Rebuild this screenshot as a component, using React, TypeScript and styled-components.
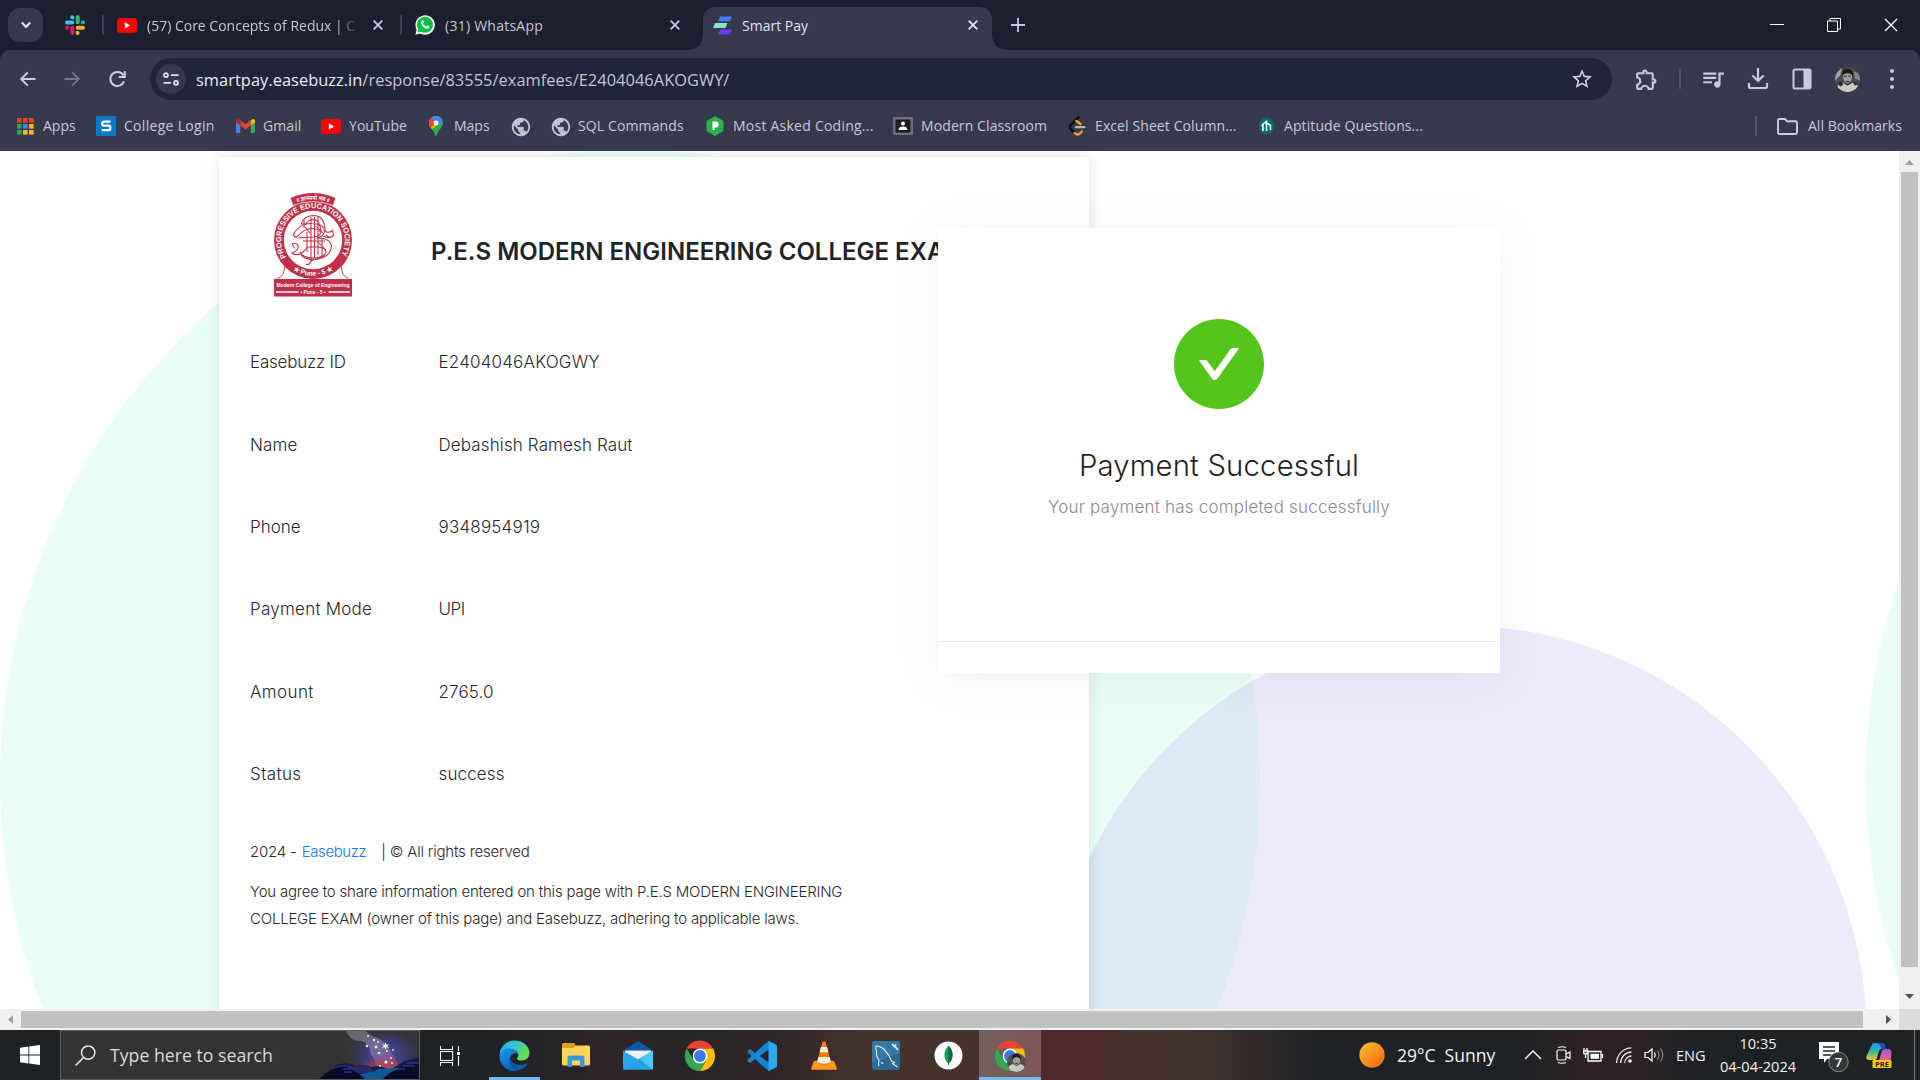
import React from "react";
import styled, { createGlobalStyle } from "styled-components";
import { MdOutlineExtension, MdQueueMusic, MdStarOutline, MdPublic } from "react-icons/md";

const uiFont = `"Open Sans", "Noto Sans", sans-serif`;
const pageFont = `"Inter", "Liberation Sans", sans-serif`;

const GlobalStyle = createGlobalStyle`
  * { box-sizing: border-box; }
  html, body { margin: 0; padding: 0; overflow: hidden; background: #fff; }
  svg { display: block; flex: none; }
`;

const Screen = styled.div`
  display: flex;
  flex-direction: column;
  width: 1920px;
  height: 1080px;
  overflow: hidden;
  background: #1b1f2f;
  font-family: ${uiFont};
`;

/* ---------- tab strip ---------- */
const TabStrip = styled.header`
  display: flex;
  align-items: center;
  height: 50px;
  flex: none;
  background: #1b1f2f;
`;
const TabSearch = styled.button`
  display: grid;
  place-items: center;
  width: 35px;
  height: 34px;
  margin: 0 0 0 8px;
  padding: 0;
  border: 0;
  border-radius: 12px;
  background: #373a4e;
`;
const PinnedTab = styled.div`
  display: flex;
  justify-content: center;
  width: 59px;
  padding-left: 5px;
`;
const StripDivider = styled.i`
  width: 2px;
  height: 20px;
  border-radius: 1px;
  background: #3d4158;
`;
const Tab = styled.div<{ $w: number; $end?: number }>`
  display: flex;
  align-items: center;
  width: ${(p) => p.$w}px;
  padding: 0 ${(p) => p.$end ?? 17}px 0 13px;
`;
const ActiveTab = styled.div`
  position: relative;
  display: flex;
  align-items: center;
  align-self: flex-end;
  width: 289px;
  height: 43px;
  margin-left: 11px;
  padding: 0 14px 7px 10px;
  border-radius: 12px 12px 0 0;
  background: #373a4e;
  &::before,
  &::after {
    content: "";
    position: absolute;
    bottom: 0;
    width: 14px;
    height: 14px;
  }
  &::before {
    left: -14px;
    background: radial-gradient(circle at 0 0, transparent 13.5px, #373a4e 14px);
  }
  &::after {
    right: -14px;
    background: radial-gradient(circle at 100% 0, transparent 13.5px, #373a4e 14px);
  }
`;
const TabTitle = styled.span<{ $active?: boolean; $fade?: boolean; $ls?: number }>`
  flex: 1;
  margin-left: 10px;
  padding-top: 1px;
  overflow: hidden;
  white-space: nowrap;
  font-size: 14px;
  line-height: 20px;
  letter-spacing: ${(p) => p.$ls ?? 0}px;
  color: ${(p) => (p.$active ? "#e3e2ee" : "#c5c6d6")};
  margin-right: ${(p) => (p.$fade ? 14 : 0)}px;
  mask-image: ${(p) => (p.$fade ? "linear-gradient(90deg,#000 190px,transparent 212px)" : "none")};
`;
const NewTab = styled.div`
  width: 14px;
  margin-left: 19px;
`;
const WindowControls = styled.div`
  display: flex;
  align-items: center;
  gap: 43px;
  margin-left: auto;
  margin-right: 22px;
`;

/* ---------- toolbar ---------- */
const Chrome = styled.div`
  flex: none;
  height: 101px;
  border-radius: 10px 10px 0 0;
  background: #373a4e;
`;
const Toolbar = styled.div`
  display: flex;
  align-items: center;
  height: 58px;
  padding-left: 18px;
`;
const NavButtons = styled.div`
  display: flex;
  gap: 24px;
  width: 132px;
`;
const Omnibox = styled.div`
  display: flex;
  align-items: center;
  width: 1462px;
  height: 42px;
  padding: 0 18px 0 6px;
  border-radius: 21px;
  background: #212538;
`;
const SiteInfo = styled.span`
  display: grid;
  place-items: center;
  width: 30px;
  height: 30px;
  border-radius: 50%;
  background: #373a4e;
`;
const Url = styled.span`
  flex: 1;
  margin-left: 10px;
  padding-top: 1px;
  font-size: 16.4px;
  line-height: 24px;
  letter-spacing: 0.04px;
  color: #c3c4d4;
`;
const Host = styled.span`
  color: #eceaf6;
`;
const Actions = styled.div`
  display: grid;
  grid-template-columns: 54px 13px 54px 35px 54px 37px 52px;
  align-items: center;
  justify-items: center;
  margin-left: 7px;
`;
const ActionDivider = styled.i`
  width: 2px;
  height: 20px;
  background: #515569;
`;

/* ---------- bookmarks ---------- */
const BookmarkBar = styled.nav`
  display: flex;
  align-items: center;
  height: 36px;
  padding: 0 18px 0 15px;
`;
const Bookmark = styled.a<{ $w: number; $ls?: number }>`
  display: flex;
  align-items: center;
  gap: 8px;
  flex: 0 0 ${(p) => p.$w}px;
  font-size: 14px;
  line-height: 20px;
  letter-spacing: ${(p) => p.$ls ?? 0}px;
  white-space: nowrap;
  color: #c9c9d6;
`;
const IconSlot = styled.span`
  display: grid;
  place-items: center;
  width: 20px;
  height: 20px;
  flex: none;
`;
const AllBookmarks = styled.a`
  display: flex;
  align-items: center;
  gap: 10px;
  margin-left: auto;
  padding-left: 20px;
  border-left: 2px solid #515569;
  font-size: 14px;
  line-height: 20px;
  letter-spacing: 0.06px;
  color: #c9c9d6;
`;

/* ---------- page ---------- */
const Viewport = styled.main`
  display: flex;
  flex: none;
  height: 858px;
  background: #fff;
`;
const Page = styled.div`
  position: relative;
  width: 1899px;
  height: 858px;
  overflow: hidden;
  padding: 6px 0 0 219px;
  font-family: ${pageFont};
`;
const Backdrop = styled.svg`
  position: absolute;
  inset: 0;
`;
const Receipt = styled.section`
  position: relative;
  width: 870px;
  height: 900px;
  padding: 36px 0 0 31px;
  background: #fff;
  box-shadow: 0 0 14px rgba(0, 0, 0, 0.11);
  color: #26282c;
`;
const ReceiptHeader = styled.div`
  display: flex;
  align-items: flex-start;
  height: 128px;
  padding-left: 24px;
`;
const Title = styled.h1`
  margin: 44px 0 0 79px;
  font-size: 24px;
  line-height: 30px;
  font-weight: 600;
  white-space: nowrap;
  color: #212427;
`;
const Row = styled.div`
  display: grid;
  grid-template-columns: 188.5px 1fr;
  align-items: center;
  height: 82.4px;
  font-size: 17px;
  line-height: 24px;
  font-weight: 300;
`;
const Cell = styled.span<{ $ls?: number }>`
  letter-spacing: ${(p) => p.$ls ?? 0.12}px;
`;
const Copyright = styled.p`
  margin: 25px 0 0;
  font-size: 15px;
  line-height: 24px;
  font-weight: 300;
  letter-spacing: -0.2px;
`;
const BrandLink = styled.a`
  margin: 0 15px 0 1px;
  letter-spacing: -0.4px;
  color: #1677ff;
`;
const Terms = styled.p`
  width: 620px;
  margin: 14px 0 0;
  font-size: 15px;
  line-height: 27px;
  font-weight: 300;
  letter-spacing: -0.21px;
`;
const ResultCard = styled.section`
  position: absolute;
  left: 938px;
  top: 77px;
  display: flex;
  flex-direction: column;
  align-items: center;
  width: 562px;
  height: 445px;
  padding-top: 91px;
  border-radius: 2px;
  background: #fff;
  box-shadow: 0 5px 50px rgba(20, 20, 50, 0.06);
`;
const ResultTitle = styled.h2`
  margin: 37px 0 0;
  font-size: 29.3px;
  line-height: 40px;
  font-weight: 300;
  letter-spacing: 0.18px;
  color: #1f1f1f;
`;
const ResultText = styled.p`
  margin: 9px 0 0;
  font-size: 17px;
  line-height: 24px;
  font-weight: 300;
  letter-spacing: 0.2px;
  color: #8a8a8a;
`;
const ResultFooter = styled.div`
  width: 560px;
  height: 32px;
  margin-top: auto;
  border-top: 1px solid #ececec;
`;

/* ---------- scrollbars ---------- */
const VTrack = styled.div`
  display: flex;
  flex-direction: column;
  align-items: center;
  width: 21px;
  padding-top: 9px;
  background: #f0f0f0;
`;
const VThumb = styled.i`
  width: 17px;
  height: 795px;
  margin: 7px 0 27px;
  background: #c1c1c1;
`;
const HTrack = styled.div`
  display: flex;
  align-items: center;
  flex: none;
  height: 21px;
  padding-left: 8px;
  background: #f0f0f0;
`;
const HThumb = styled.i`
  width: 1842px;
  height: 17px;
  margin: 0 23px 0 8px;
  background: #c1c1c1;
`;
const Corner = styled.i`
  width: 21px;
  height: 21px;
  margin-left: auto;
  background: #dcdcdc;
`;

/* ---------- taskbar ---------- */
const Taskbar = styled.footer`
  display: flex;
  align-items: stretch;
  height: 50px;
  flex: none;
  background: linear-gradient(
    90deg,
    #1c2226 0, #1c2226 460px, #242427 540px, #2f2526 600px, #292526 680px, #302628 780px,
    #44332b 860px, #45322b 990px, #50282c 1050px, #4f282c 1090px, #45322b 1130px, #43312c 1200px,
    #1e2227 1320px, #1c2226 1500px, #2f2225 1590px, #2f2225 1640px, #1c2226 1700px, #1c2226 1920px
  );
`;
const StartButton = styled.div`
  display: grid;
  place-items: center;
  width: 60px;
`;
const SearchBox = styled.div`
  display: flex;
  align-items: center;
  width: 360px;
  padding-left: 14px;
  border: 1px solid #5c5c5c;
  background: #333;
  font-size: 17.7px;
  line-height: 26px;
  color: #dadada;
`;
const SearchLabel = styled.span`
  flex: 1;
  margin-left: 14px;
`;
const AppButtons = styled.div`
  display: flex;
`;
const AppButton = styled.div<{ $w?: number; $open?: boolean; $active?: boolean }>`
  display: grid;
  place-items: center;
  width: ${(p) => p.$w ?? 62}px;
  padding-top: 1px;
  background: ${(p) => (p.$active ? "linear-gradient(90deg,#73605c,#7c5558)" : "none")};
  box-shadow: ${(p) => (p.$active || p.$open ? "inset 0 -3px #76b9ed" : "none")};
  margin: ${(p) => (p.$open ? "0 5.5px 0 8.5px" : "0")};
`;
const Tray = styled.div`
  display: flex;
  align-items: center;
  margin-left: auto;
  color: #f2f2f2;
`;
const Weather = styled.div`
  display: flex;
  align-items: center;
  gap: 12px;
  width: 165px;
  font-size: 17.5px;
  line-height: 26px;
  white-space: pre;
`;
const TrayIcons = styled.div`
  display: grid;
  grid-template-columns: 30px 30px 31px 29px 33px;
  align-items: center;
  justify-items: center;
  margin-left: -6px;
`;
const Language = styled.span`
  width: 36px;
  margin-left: 5px;
  font-size: 14.6px;
`;
const Clock = styled.div`
  width: 92px;
  text-align: center;
  font-size: 14.6px;
  line-height: 23px;
`;
const Notifications = styled.div`
  margin: 4px 17px 0 15px;
`;
const PeekEdge = styled.i`
  width: 6px;
  height: 50px;
  margin-left: 22px;
  border-left: 1px solid #707477;
`;

/* ---------- icons ---------- */
const Cross = ({ s = 10, w = 1.8, c = "#c9c9e0" }) => (
  <svg width={s} height={s} viewBox="0 0 10 10" stroke={c} strokeWidth={w}>
    <path d="M.7.7l8.6 8.6M9.3.7L.7 9.3" />
  </svg>
);
const Slack = () => (
  <svg width="20" height="20" viewBox="0 0 20 20">
    <g fill="#36c5f0"><rect x="0" y="5.4" width="9.2" height="4" rx="2" /><path d="M9.2 4.2H7.2a2 2 0 1 1 2-2z" /></g>
    <g fill="#2eb67d"><rect x="10.7" y="0" width="4" height="9.3" rx="2" /><path d="M15.9 9.3v-2a2 2 0 1 1 2 2z" /></g>
    <g fill="#ecb22e"><rect x="10.7" y="10.7" width="9.3" height="4" rx="2" /><path d="M10.7 15.9h2a2 2 0 1 1-2 2z" /></g>
    <g fill="#e01e5a"><rect x="5.3" y="10.7" width="4" height="9.3" rx="2" /><path d="M4.1 10.7v2a2 2 0 1 1-2-2z" /></g>
  </svg>
);
const YouTube = () => (
  <svg width="20" height="15" viewBox="0 0 20 15">
    <rect width="20" height="15" rx="3.4" fill="#f00" />
    <path d="M7.800 4.300l5.400 3.200-5.400 3.200z" fill="#fff" />
  </svg>
);
const WhatsApp = () => (
  <svg width="20" height="20" viewBox="0 0 20 20">
    <path d="M.3 19.7l1.4-5A9.7 9.7 0 1 1 5.4 18.400z" fill="#fff" />
    <path d="M2.400 17.600l.9-3.300a8 8 0 1 1 2.600 2.400z" fill="#08c143" />
    <path d="M6.900 5.300c.5-.4 1-.3 1.200.2l.7 1.600c.1.500-.6 1-.8 1.400.7 1.400 1.800 2.500 3.300 3.100.5-.3.900-1.200 1.400-1l1.700.9c.6.500-.2 1.900-1 2.200-3.800 1.100-9.200-4.700-6.500-8.400z" fill="#fff" />
  </svg>
);
const SmartPay = () => (
  <svg width="19" height="19" viewBox="0 0 19 19">
    <path d="M7 .5h12l-2 4.800H5z" fill="#4a7df0" />
    <path d="M2 7h12.500l-2 5H0z" fill="#7cebc8" />
    <path d="M7 13.500h12l-2 5H5z" fill="#6a3df0" />
  </svg>
);
const AppsGrid = () => (
  <svg width="17" height="17" viewBox="0 0 17 17">
    {["#ea4335", "#ea4335", "#ea4335", "#34a853", "#4285f4", "#fbbc04", "#34a853", "#fbbc04", "#fbbc04"].map((c, i) => (
      <rect key={i} x={(i % 3) * 6} y={Math.floor(i / 3) * 6} width="4.600" height="4.600" fill={c} />
    ))}
  </svg>
);
const CollegeS = () => (
  <svg width="20" height="20" viewBox="0 0 20 20">
    <rect width="20" height="20" fill="#0a78c8" />
    <path d="M14.500 5.700H8.200q-2 0-2 2t2 2h4q2.200 0 2.200 2.200t-2.200 2.300H5.700" fill="none" stroke="#fff" strokeWidth="2.300" />
  </svg>
);
const Gmail = () => (
  <svg width="19" height="14" viewBox="0 0 19 14">
    <path d="M0 2v10.700Q0 14 1.300 14h3V5.200z" fill="#4285f4" />
    <path d="M19 2v10.700q0 1.300-1.300 1.300h-3V5.200z" fill="#34a853" />
    <path d="M14.700 1.300V6.500L19 3.300V2c0-1.800-1.800-2.400-3-1.600z" fill="#fbbc04" />
    <path d="M4.300 6.500V1.300l5.200 3.900 5.200-3.900v5.200L9.500 10.400z" fill="#ea4335" />
    <path d="M0 2v1.300l4.300 3.200V1.300L3 .4C1.800-.4 0 .2 0 2z" fill="#c5221f" />
  </svg>
);
const Maps = () => (
  <svg width="14" height="20" viewBox="0 0 14 20">
    <clipPath id="pin"><path d="M7 0a7 7 0 0 1 7 7c0 4.500-5 6.500-6 12q-1 2-2 0C5 13.500 0 11.500 0 7a7 7 0 0 1 7-7z" /></clipPath>
    <g clipPath="url(#pin)">
      <rect width="14" height="20" fill="#34a853" />
      <path d="M0 0h14L5 12 0 14z" fill="#fbbc04" />
      <path d="M0 0h6l3 4-6 7H0z" fill="#ea4335" />
      <path d="M3 0h11v6L8 8 3 3z" fill="#4285f4" />
    </g>
    <circle cx="7" cy="7" r="2.500" fill="#fff" />
  </svg>
);
const Prep = () => (
  <svg width="18" height="20" viewBox="0 0 18 20">
    <path d="M9 0l8.500 5v10L9 20 .500 15V5z" fill="#2bb24c" />
    <path d="M6.500 14V5.600h3.300a2.900 2.900 0 0 1 0 5.800H8.600V14z" fill="#fff" />
  </svg>
);
const Classroom = () => (
  <svg width="20" height="18" viewBox="0 0 20 18">
    <rect width="20" height="18" rx="1" fill="#6d6f75" />
    <rect x="2.500" y="2.500" width="15" height="13" fill="#1d1e22" />
    <circle cx="10" cy="6.500" r="2" fill="#fff" />
    <path d="M5.500 13c0-2.500 2-3.500 4.500-3.500s4.500 1 4.500 3.500z" fill="#fff" />
  </svg>
);
const LeetCode = () => (
  <svg width="18" height="20" viewBox="0 0 18 20" fill="none" strokeWidth="2.300" strokeLinecap="round">
    <path d="M10.500 1.200L2.600 9.400q-1.500 1.700 0 3.500l4 4.200" stroke="#0c0c0c" />
    <path d="M8.500 5l4 3M6.600 17q2.800 2.800 5.600.2l1.600-1.700" stroke="#ffa116" />
    <path d="M8 11.200h8.500" stroke="#b3b3b3" />
  </svg>
);
const Aptitude = () => (
  <svg width="17" height="18" viewBox="0 0 17 18">
    <ellipse cx="8.500" cy="9" rx="7.800" ry="8.800" fill="#0c6b66" />
    <path d="M5 14V7.500L3.500 9M5 7.500l1-1.500M8.500 14V4.500L6.500 6M8.500 7c2.500-.5 4 .5 4 3v3" fill="none" stroke="#fff" strokeWidth="1.600" />
  </svg>
);
const Avatar = ({ s = 25 }) => (
  <svg width={s} height={s} viewBox="0 0 24 24">
    <clipPath id={`face${s}`}><circle cx="12" cy="12" r="12" /></clipPath>
    <g clipPath={`url(#face${s})`}>
      <rect width="24" height="24" fill="#4a4c4c" />
      <path d="M0 3l7-3-2 8-5 5z" fill="#a2a5a3" />
      <path d="M18 4l6 3v6l-5-2z" fill="#858886" />
      <path d="M1 24q1-8 6-9l5 3 5-3q6 1 6 9z" fill="#c9cbc9" />
      <path d="M2 15l4-1 2 3-3 2zM17 14l5 2-3 2z" fill="#2b2c2c" />
      <ellipse cx="12" cy="9.500" rx="4.300" ry="6" fill="#9b9b98" />
      <path d="M7 9Q6 2 12 2t5.500 7Q15.500 5.500 12 6 8.500 5.500 7 9zM10 13.200q2 .8 4 0l-1 1.300h-2z" fill="#161616" />
      <path d="M8.800 8.800h2.500M12.800 8.800h2.500" stroke="#222" strokeWidth="1" />
    </g>
  </svg>
);
const CheckCircle = () => (
  <svg width="90" height="90" viewBox="64 64 896 896" fill="#52c41a">
    <path d="M512 64C264.600 64 64 264.600 64 512s200.600 448 448 448 448-200.600 448-448S759.400 64 512 64zm193.500 301.700l-210.600 292a31.800 31.800 0 01-51.700 0L318.500 484.900c-3.800-5.300 0-12.700 6.500-12.700h46.900c10.200 0 19.900 4.900 25.900 13.300l71.200 98.800 157.200-218c6-8.300 15.600-13.300 25.900-13.300H699c6.500 0 10.300 7.400 6.500 12.700z" />
  </svg>
);

const crest = "#c0304a";
const Crest = () => (
  <svg width="78" height="104" viewBox="0 0 78 104" overflow="visible" fontFamily="Liberation Sans, Arial, sans-serif" fontWeight="700">
    <defs>
      <path id="ringTop" d="M12.800 65A31.800 31.800 0 1 1 65.200 65" />
      <path id="ringBottom" d="M8 64.500A35.500 35.500 0 0 0 70 64.500" />
      <path id="banner" d="M19 10.800Q39 2.800 59 10.800" />
    </defs>
    <path d="M10.500 74q0 9-7 11.500M67.500 74q0 9 7 11.500" fill="none" stroke={crest} strokeWidth=".9" />
    <path d="M16.500 5Q39-5 61.500 5L58.500 13Q39 6 19.500 13z" fill={crest} />
    <circle cx="39" cy="47" r="39" fill={crest} />
    <path d="M18.800 12.500Q39 4.700 59.200 12.500" fill="none" stroke="#fff" strokeWidth=".7" />
    <circle cx="39" cy="47" r="29.200" fill="#fff" />
    <text fontSize="6" fill="#fff" fontFamily="Noto Sans, sans-serif"><textPath href="#banner" startOffset="50%" textAnchor="middle" textLength="33" lengthAdjust="spacingAndGlyphs">॥ ज्ञानमयो भव ॥</textPath></text>
    <text fontSize="7.600" fill="#fff"><textPath href="#ringTop" startOffset="1" textLength="133" lengthAdjust="spacingAndGlyphs">PROGRESSIVE EDUCATION SOCIETY</textPath></text>
    <text fontSize="6.800" fill="#fff"><textPath href="#ringBottom" startOffset="50%" textAnchor="middle">★ Pune - 5 ★</textPath></text>
    <g fill="none" stroke={crest} strokeWidth="1.050">
      <path d="M37 24v44q-1 4-5 3.500M40.500 24v40q-.5 3-3.500 4.500M44 24v38" />
      <path d="M27 31q3-8 12-8.500 9 0 11 8l1.500 8q3 2 7-1l1 5q-5 4-10 .5M27 31l5 0q2-4 7-4.500 5.500.5 6.500 5l2 7.500" />
      <path d="M21 39q6-9 17-8.500 11 0 12.500 7 0 6-8 7.500 14 0 15 8-1 12-17 13.500M25 42q5-6 13-6.500 8 .5 8.500 4 0 3.500-7 4.500L24 45" />
      <path d="M21 39l-2 3 3 2.500 3-2.500M18 51q5-2 6 2t-6 7q5 4 11-1l5-5h10q8 1 8 5-1 5-12 6-11 0-14-6M18 51l3 4.500" />
      <path d="M30 26v9M33 39v20M48 45v18M52 42l4 3M29 48h22M31 34l5 6M42 33l7 7M44 49l8 8M27 62q10 9 24 0" />
    </g>
    <rect y="86" width="78" height="17.500" fill={crest} />
    <text x="39" y="94" textAnchor="middle" fontSize="5.600" fill="#fff" textLength="73" lengthAdjust="spacingAndGlyphs">Modern College of Engineering</text>
    <text x="39" y="101" textAnchor="middle" fontSize="5" fill="#fff" textLength="25" lengthAdjust="spacingAndGlyphs">• Pune - 5 •</text>
    <path d="M2 99h22.500M54.500 99H76" stroke="#fff" strokeWidth="1.500" />
  </svg>
);

const SearchArt = () => (
  <svg width="100" height="48" viewBox="0 0 100 48">
    <defs>
      <radialGradient id="sky" cx="54%" cy="50%" r="50%"><stop offset="0" stopColor="#4b4aa8" /><stop offset=".5" stopColor="#3c3c7c" stopOpacity=".85" /><stop offset="1" stopColor="#333" stopOpacity="0" /></radialGradient>
      <radialGradient id="glow"><stop offset="0" stopColor="#c8404c" /><stop offset="1" stopColor="#c8404c" stopOpacity="0" /></radialGradient>
      <linearGradient id="smoke" x1="0" y1="0" x2=".6" y2="1"><stop offset="0" stopColor="#8d8c96" /><stop offset=".6" stopColor="#8f86a8" /><stop offset="1" stopColor="#b0506a" /></linearGradient>
    </defs>
    <ellipse cx="62" cy="24" rx="42" ry="30" fill="url(#sky)" />
    <path d="M27 0h20q4 5 12 7 8 4 12 12 6 10 12 22H56q2-9-2-15-4-4-3-9-3-6-10-7-10 0-14-10z" fill="url(#smoke)" opacity=".6" />
    <ellipse cx="63" cy="39" rx="25" ry="14" fill="url(#glow)" />
    <path d="M0 48l10-6 6-8q14-4 20 1l10-1 6 2q8-2 12 0l6 3 16-9 14-4v22z" fill="#181a45" />
    <path d="M14 36q13-5 20 0l14-2q8 4 4 8H12z" fill="#2b2a68" />
    <path d="M36 44q16-2 24-6l20-1q-4 5-14 11H30z" fill="#0a5a9a" />
    <path d="M0 48q14-14 28-12l12 7 6 5zM64 48q10-12 36-16v16z" fill="#080c26" />
    <path d="M24 38h8M25 41h8M88 32h12M84 35h12M76 38h10" stroke="#3b50d0" strokeWidth=".9" />
    {[[49, 5, 1], [55, 9, 1.200], [59, 11, 1], [48, 15, 1.300], [57, 16, 1.500], [60, 22, 1.300], [68, 20, 1], [74, 19, 1], [72, 27, 1], [67, 31, 1.700], [73, 32, 1], [61, 35, 1]].map(([x, y, r], i) => (
      <circle key={i} cx={x} cy={y} r={r} fill="#f4e8dc" />
    ))}
    <path d="M66.500 11l.9 2.700 2.700-.7-1.800 2 1.800 2-2.700-.7-.9 2.700-.9-2.700-2.700.7 1.800-2-1.800-2 2.700.7z" fill="#f4e8dc" />
  </svg>
);

const Edge = () => (
  <svg width="31" height="31" viewBox="0 0 31 31">
    <defs>
      <linearGradient id="e1" x1="0" y1="0" x2="1" y2=".5"><stop offset="0" stopColor="#2aa5e8" /><stop offset=".5" stopColor="#35c4d0" /><stop offset="1" stopColor="#66e042" /></linearGradient>
      <linearGradient id="e2" x1="0" y1="0" x2=".6" y2="1"><stop offset="0" stopColor="#1b9de2" /><stop offset="1" stopColor="#0a62c0" /></linearGradient>
    </defs>
    <path d="M.6 14C1.500 5.500 8 .5 15.500.5c9 0 15 6 15 12.500 0 5-4 7.500-8 7.500-3.500 0-5-1.500-4.500-2.500 1.500-1.500 1.500-3 1-4.500C17.500 9 8 6 .6 14z" fill="url(#e1)" />
    <path d="M.6 14C3 9.500 7 8.200 11 8.500c4.500.5 7.500 3 8 5.500-2-1.500-6.500-1-8 3.500-1.500 5 2 11.500 9 12.700C8 33.500-.5 24.500.6 14z" fill="url(#e2)" />
    <path d="M11 17.500c-2.500 7 5 13.500 10 12.300 4-1 6.500-3.500 8-6 .3-.6-.2-.9-.8-.6C20 27 12 24 11 17.500z" fill="#0c59a4" />
  </svg>
);
const Explorer = () => (
  <svg width="28" height="25" viewBox="0 0 28 25">
    <path d="M0 1.500Q0 0 1.500 0H12l2 3v4H0z" fill="#e0a106" />
    <path d="M0 5h11l3-2.500h12.500Q28 2.500 28 4v17q0 1.500-1.500 1.500h-25Q0 22.500 0 21z" fill="#ffd45a" />
    <path d="M5.500 24V14.500q0-2 2-2h13q2 0 2 2V24h-4.500v-5.500q0-1-1-1h-6q-1 0-1 1V24z" fill="#3b97dd" />
  </svg>
);
const Mail = () => (
  <svg width="30" height="29" viewBox="0 0 30 29">
    <path d="M0 9.500L15 0l15 9.500z" fill="#0d57ad" />
    <path d="M2 9.500h26v9H2z" fill="#f0f0f0" />
    <path d="M0 9.500L15 18.500 30 9.500V27q0 1.500-1.500 1.500h-27Q0 28.500 0 27z" fill="#27a7ec" />
    <path d="M30 9.500L13 20l17 8.500z" fill="#48cbf8" />
    <path d="M0 28.500L17 18l12.500 10.500z" fill="#27a0e8" />
  </svg>
);
const ChromeLogo = ({ badge = false }) => (
  <svg width="32" height="32" viewBox="0 0 32 32">
    <path d="M2.500 8.500A15 15 0 0 1 29 8.500H16z" fill="#ea4335" />
    <path d="M16 8.500H29A15 15 0 0 1 16 31l6.500-11.500z" fill="#fbbc04" />
    <path d="M2.800 8.500L9.500 19.700 16 23l5-1.500L16 31A15 15 0 0 1 2.800 8.500z" fill="#34a853" />
    <circle cx="16" cy="16" r="7.400" fill="#fff" />
    <circle cx="16" cy="16" r="5.900" fill="#3b78e7" />
    {badge && (
      <g>
        <clipPath id="badge"><circle cx="22.500" cy="22.500" r="9.500" /></clipPath>
        <g clipPath="url(#badge)">
          <rect x="12" y="12" width="21" height="21" fill="#4d4f4f" />
          <path d="M12 33q2-8 7-9l3.500 2 4-2q5 1 6 9z" fill="#c4c6c4" />
          <ellipse cx="22.500" cy="20" rx="3.800" ry="4.800" fill="#9b9b98" />
          <path d="M18 20q0-6 4.500-6t4.500 6q-2-3-4.500-3t-4.500 3zM21 23q1.500.6 3 0l-.6 1h-1.800z" fill="#1d1d1d" />
        </g>
      </g>
    )}
  </svg>
);
const VSCode = () => (
  <svg width="30" height="30" viewBox="0 0 30 30">
    <path d="M22 .3L8.800 12.400 3.200 8.100 0.700 9.300v2.200L19 28l3 1.500 1-8z" fill="#0f7ec9" />
    <path d="M22 29.700L8.800 17.600l-5.600 4.300L.7 20.700v-2.200L19 2l3-1.700 1 8z" fill="#1488d2" />
    <path d="M22 .3l7 3.200q1 .5 1 1.500v20q0 1-1 1.500l-7 3.200q-.8.200-1.500-.6.900.4.900-.8V1.700q0-1.200-.9-.8.700-.8 1.500-.6z" fill="#2aaaf2" />
    <path d="M21.400 8.500L13 15l8.400 6.500z" fill="#292526" />
  </svg>
);
const VLC = () => (
  <svg width="26" height="29" viewBox="0 0 26 29">
    <path d="M3 20h20l3 7.500q0 1.200-1 1.200H1q-1 0-1-1.200z" fill="#f99a1c" />
    <path d="M11.300 1q1.700-1.500 3.400 0L20 22q-7 4-14 0z" fill="#f57c00" />
    <path d="M10 6h6l1.400 5.200H8.600zM7.300 16h11.400l1.300 5q-7 3.500-14 0z" fill="#f0eeea" />
  </svg>
);
const MySQL = () => (
  <svg width="28" height="29" viewBox="0 0 28 29">
    <rect width="28" height="29" rx="2.500" fill="#2a6a94" />
    <path d="M0 2.500Q0 0 2.500 0h23Q28 0 28 2.500V12L0 22z" fill="#357aa6" />
    <path d="M7 25q-1-3 0-6-3-4-2.500-9Q3 6 4.500 5q4 0 8 4 5 5 7 11l3 1.500-2 1 5 3.500M9 22q1-1 2 1" fill="none" stroke="#e6f1f8" strokeWidth="1.100" />
    <path d="M20 3l3 3M24 3.500l-2.500 2.500M22.500 5l3.500 4" stroke="#e6f1f8" strokeWidth="1.700" />
  </svg>
);
const Mongo = () => (
  <svg width="29" height="29" viewBox="0 0 29 29">
    <circle cx="14.500" cy="14.500" r="14" fill="#fbfbfb" />
    <path d="M14.500 4.500q4.500 5 4 10.500-.5 4.500-4 7.500-3.500-3-4-7.500-.5-5.500 4-10.500z" fill="#12a05c" />
    <path d="M14.500 4.500q4.500 5 4 10.500-.5 4.500-4 7.500z" fill="#0b6b45" />
    <path d="M14.500 20v4" stroke="#0b6b45" />
  </svg>
);

const bookmarks: { label?: string; w: number; ls?: number; icon: React.ReactNode }[] = [
  { label: "Apps", w: 81, icon: <AppsGrid /> },
  { label: "College Login", w: 139, ls: 0.3, icon: <CollegeS /> },
  { label: "Gmail", w: 86, ls: 0.1, icon: <Gmail /> },
  { label: "YouTube", w: 105, ls: 0.05, icon: <YouTube /> },
  { label: "Maps", w: 84, icon: <Maps /> },
  { w: 40, icon: <MdPublic size={22} color="#c4c5cc" /> },
  { label: "SQL Commands", w: 155, ls: 0.12, icon: <MdPublic size={22} color="#c4c5cc" /> },
  { label: "Most Asked Coding...", w: 188, ls: 0.24, icon: <Prep /> },
  { label: "Modern Classroom", w: 174, ls: 0.1, icon: <Classroom /> },
  { label: "Excel Sheet Column...", w: 189, ls: 0.1, icon: <LeetCode /> },
  { label: "Aptitude Questions...", w: 180, ls: 0.1, icon: <Aptitude /> },
];

const details: [string, string, number?, number?][] = [
  ["Easebuzz ID", "E2404046AKOGWY", -0.22, 0.18],
  ["Name", "Debashish Ramesh Raut"],
  ["Phone", "9348954919", 0, 0.2],
  ["Payment Mode", "UPI", 0.25, -0.5],
  ["Amount", "2765.0", 0.4],
  ["Status", "success", 0.4],
];

const BrowserTabs = () => (
  <TabStrip>
    <TabSearch>
      <svg width="10" height="8" viewBox="0 0 10 8" fill="none" stroke="#e6e6f2" strokeWidth="2"><path d="M.8 1.500L5 6l4.200-4.500" /></svg>
    </TabSearch>
    <PinnedTab><Slack /></PinnedTab>
    <StripDivider />
    <Tab $w={296}>
      <YouTube />
      <TabTitle $fade>(57) Core Concepts of Redux | C</TabTitle>
      <Cross />
    </Tab>
    <StripDivider />
    <Tab $w={290} $end={12}>
      <WhatsApp />
      <TabTitle $ls={0.25}>(31) WhatsApp</TabTitle>
      <Cross />
    </Tab>
    <ActiveTab>
      <SmartPay />
      <TabTitle $active>Smart Pay</TabTitle>
      <Cross c="#e6e6f2" />
    </ActiveTab>
    <NewTab>
      <svg width="14" height="14" viewBox="0 0 14 14" stroke="#c9c9e6" strokeWidth="1.800"><path d="M7 0v14M0 7h14" /></svg>
    </NewTab>
    <WindowControls>
      <svg width="14" height="14" viewBox="0 0 14 14" stroke="#fff"><path d="M0 6.500h14" /></svg>
      <svg width="14" height="14" viewBox="0 0 14 14" fill="none" stroke="#fff"><path d="M.5 3h10v10.500H.5zM3 3V.5h10.500V11h-3" /></svg>
      <Cross s={14} w={0.9} c="#fff" />
    </WindowControls>
  </TabStrip>
);

const BrowserToolbar = () => (
  <Toolbar>
    <NavButtons>
      <svg width="20" height="20" viewBox="0 0 20 20" fill="none" stroke="#cfcde6" strokeWidth="1.900"><path d="M17.500 10H3.500M9.800 3.300L3.100 10l6.700 6.700" /></svg>
      <svg width="20" height="20" viewBox="0 0 20 20" fill="none" stroke="#74778b" strokeWidth="1.900"><path d="M2.500 10h14M10.200 3.300L16.900 10l-6.700 6.700" /></svg>
      <svg width="22" height="20" viewBox="0 0 22 20" fill="none" stroke="#cfcde6" strokeWidth="2"><path d="M18 12.300A7 7 0 1 1 17.500 6.500M18.800 2v6h-6" /></svg>
    </NavButtons>
    <Omnibox>
      <SiteInfo>
        <svg width="16" height="14" viewBox="0 0 16 14" fill="none" stroke="#e3e3ee" strokeWidth="1.800"><circle cx="3" cy="3.200" r="2" /><circle cx="13" cy="10.800" r="2" /><path d="M8 3.200h7.500M.5 10.800H8" /></svg>
      </SiteInfo>
      <Url><Host>smartpay.easebuzz.in</Host>/response/83555/examfees/E2404046AKOGWY/</Url>
      <MdStarOutline size={24} color="#d0d0d8" />
    </Omnibox>
    <Actions>
      <MdOutlineExtension size={25} color="#cac8e8" />
      <ActionDivider />
      <MdQueueMusic size={26} color="#cac8e8" />
      <svg width="22" height="22" viewBox="0 0 22 22" fill="none" stroke="#cac8e8" strokeWidth="2.200"><path d="M11 0v12.500M5.500 7.500L11 13l5.500-5.500M2 15v3.500Q2 20 3.500 20h15q1.500 0 1.500-1.500V15" /></svg>
      <svg width="20" height="22" viewBox="0 0 20 22"><rect x="1.500" y="1.500" width="17" height="19" rx="1.500" fill="none" stroke="#cac8e8" strokeWidth="2" /><path d="M11.500 1.500h6q1 0 1 1v17q0 1-1 1h-6z" fill="#cac8e8" /></svg>
      <Avatar />
      <svg width="22" height="22" viewBox="0 0 22 22" fill="#cac8e8"><circle cx="11" cy="3" r="2" /><circle cx="11" cy="11" r="2" /><circle cx="11" cy="19" r="2" /></svg>
    </Actions>
  </Toolbar>
);

const PaymentPage = () => (
  <Page>
    <Backdrop width="1899" height="858" viewBox="0 151 1899 858">
      <circle cx="630" cy="780" r="630" fill="#e9fef8" />
      <circle cx="2496" cy="780" r="630" fill="#e9fef8" />
      <circle cx="1458" cy="1034" r="408.500" fill="rgb(165,150,235)" fillOpacity=".2" />
    </Backdrop>
    <Receipt>
      <ReceiptHeader>
        <Crest />
        <Title>P.E.S MODERN ENGINEERING COLLEGE EXAM</Title>
      </ReceiptHeader>
      {details.map(([k, v, ls, vls]) => (
        <Row key={k}>
          <Cell $ls={ls}>{k}</Cell>
          <Cell $ls={vls}>{v}</Cell>
        </Row>
      ))}
      <Copyright>2024 - <BrandLink>Easebuzz</BrandLink>| © All rights reserved</Copyright>
      <Terms>You agree to share information entered on this page with P.E.S MODERN ENGINEERING COLLEGE EXAM (owner of this page) and Easebuzz, adhering to applicable laws.</Terms>
    </Receipt>
    <ResultCard>
      <CheckCircle />
      <ResultTitle>Payment Successful</ResultTitle>
      <ResultText>Your payment has completed successfully</ResultText>
      <ResultFooter />
    </ResultCard>
  </Page>
);

const WindowsTaskbar = () => (
  <Taskbar>
    <StartButton>
      <svg width="20" height="20" viewBox="0 0 20 20" fill="#fff"><path d="M0 2.800L8.400 1.600v8H0zM9.200 1.500L20 0v9.600H9.200zM0 10.400h8.400v8L0 17.200zM9.200 10.400H20V20L9.200 18.500z" /></svg>
    </StartButton>
    <SearchBox>
      <svg width="21" height="21" viewBox="0 0 21 21" fill="none" stroke="#e8e8e8" strokeWidth="1.500"><circle cx="13.200" cy="7.600" r="6.700" /><path d="M8.600 12.500L.6 20.400" /></svg>
      <SearchLabel>Type here to search</SearchLabel>
      <SearchArt />
    </SearchBox>
    <AppButtons>
      <AppButton $w={60}>
        <svg width="20" height="20" viewBox="0 0 20 20" fill="none" stroke="#fff" strokeWidth="1.100"><path d="M.5 0v3.500h12V0M.5 20v-3.500h12V20M.5 5.500h12v9H.5zM18.500 0v5M18.500 10v10" /><path d="M17 6h3v3h-3z" fill="#fff" stroke="none" /></svg>
      </AppButton>
      <AppButton $w={51} $open><Edge /></AppButton>
      <AppButton><Explorer /></AppButton>
      <AppButton><Mail /></AppButton>
      <AppButton><ChromeLogo /></AppButton>
      <AppButton><VSCode /></AppButton>
      <AppButton><VLC /></AppButton>
      <AppButton><MySQL /></AppButton>
      <AppButton><Mongo /></AppButton>
      <AppButton $active><ChromeLogo badge /></AppButton>
    </AppButtons>
    <Tray>
      <Weather>
        <svg width="26" height="26" viewBox="0 0 26 26"><defs><linearGradient id="sun" x1="0" y1="0" x2="1" y2="1"><stop offset="0" stopColor="#f9c331" /><stop offset="1" stopColor="#f2620c" /></linearGradient></defs><circle cx="13" cy="13" r="12.700" fill="url(#sun)" /></svg>
        <span>29°C  Sunny</span>
      </Weather>
      <TrayIcons>
        <svg width="18" height="10" viewBox="0 0 18 10" fill="none" stroke="#fff" strokeWidth="1.400"><path d="M1 9l8-8 8 8" /></svg>
        <svg width="15" height="18" viewBox="0 0 15 18" fill="none" stroke="#fff" strokeWidth="1.200"><rect x="1" y="4" width="9" height="10" rx="1.500" /><path d="M10 8l4-2v6.500L10 10.500M2 1.500q4-1.500 8 0M2 16.500q4 1.500 8 0" /></svg>
        <svg width="21" height="15" viewBox="0 0 21 15" fill="none" stroke="#fff" strokeWidth="1.300"><path d="M5 3.500h13v9.500H5zM19.500 6v4" /><path d="M7.500 5.800h8.500v5H7.500z" fill="#fff" stroke="none" /><path d="M1 0v3M4 0v3M0 3h5v2.500H1zM2.500 5v5" /></svg>
        <svg width="16" height="16" viewBox="0 0 16 16" fill="none" stroke="#e6e6e6" strokeWidth="1.300"><path d="M.7 16A15 15 0 0 1 15.500.8M4.700 16A11 11 0 0 1 15.500 5M8.700 16A7 7 0 0 1 15.500 9" /><circle cx="14" cy="14" r="1.800" fill="#fff" stroke="none" /></svg>
        <svg width="21" height="16" viewBox="0 0 21 16" fill="none" stroke="#fff" strokeWidth="1.200"><path d="M1 5.500h3L8 2v12l-4-3.500H1zM10.500 5.500q1.500 2.500 0 5" /><path d="M13.500 3.500q3 4.500 0 9M16.500 1.500q4.500 6.500 0 13" stroke="#85888b" /></svg>
      </TrayIcons>
      <Language>ENG</Language>
      <Clock>10:35<br />04-04-2024</Clock>
      <Notifications>
        <svg width="30" height="32" viewBox="0 0 30 32"><path d="M0 1h20v17H8l-3 4v-4H0z" fill="#fff" /><path d="M4 6h12M4 10h12M4 14h8" stroke="#24282b" strokeWidth="1.300" /><circle cx="19.500" cy="21" r="9.700" fill="#33373a" stroke="#8a8d8f" /><text x="19.500" y="26" textAnchor="middle" fontSize="13" fontWeight="600" fill="#fff">7</text></svg>
      </Notifications>
      <svg width="26" height="25" viewBox="0 0 26 25">
        <defs><linearGradient id="cp1" x1="0" y1="0" x2="0" y2="1"><stop offset="0" stopColor="#2196f3" /><stop offset=".5" stopColor="#35b8a0" /><stop offset="1" stopColor="#f2c81a" /></linearGradient><linearGradient id="cp2" x1="0" y1="0" x2="0" y2="1"><stop offset="0" stopColor="#a056f0" /><stop offset="1" stopColor="#f06a78" /></linearGradient></defs>
        <path d="M6 1.500Q6.500 0 8 0h8q2 0 2.500 2l1 4h-4q-2 0-2.500 2l-2 7q-.7 2-2.500 2H3q-3.500 0-2.500-4z" fill="url(#cp1)" />
        <path d="M19 6h3q3.500 0 3.500 4l-1 8H13l2.500-9q.8-3 3.500-3z" fill="url(#cp2)" />
        <path d="M10 0h6q2 0 2.500 2l1 4h-4q-1-5-5.500-6z" fill="#1a50b8" />
        <rect x="6.500" y="17" width="19" height="8" rx="1.500" fill="#f8c81c" />
        <text x="16" y="23.800" textAnchor="middle" fontSize="7.500" fontWeight="700" fill="#222">PRE</text>
      </svg>
      <PeekEdge />
    </Tray>
  </Taskbar>
);

export default function App() {
  return (
    <Screen>
      <GlobalStyle />
      <BrowserTabs />
      <Chrome>
        <BrowserToolbar />
        <BookmarkBar>
          {bookmarks.map((b, i) => (
            <Bookmark key={i} $w={b.w} $ls={b.ls}>
              <IconSlot>{b.icon}</IconSlot>
              {b.label}
            </Bookmark>
          ))}
          <AllBookmarks>
            <svg width="21" height="17" viewBox="0 0 21 17" fill="none" stroke="#d0d0d8" strokeWidth="1.900"><path d="M1 2.500Q1 1 2.500 1H8l2.200 2.300h8.300q1.500 0 1.500 1.500v9.700q0 1.500-1.500 1.500h-16Q1 16 1 14.500z" /></svg>
            All Bookmarks
          </AllBookmarks>
        </BookmarkBar>
      </Chrome>
      <Viewport>
        <PaymentPage />
        <VTrack>
          <svg width="9" height="5" viewBox="0 0 9 5"><path d="M0 5l4.500-5L9 5z" fill="#a0a0a0" /></svg>
          <VThumb />
          <svg width="9" height="5" viewBox="0 0 9 5"><path d="M0 0h9L4.500 5z" fill="#505050" /></svg>
        </VTrack>
      </Viewport>
      <HTrack>
        <svg width="5" height="9" viewBox="0 0 5 9"><path d="M5 0v9L0 4.500z" fill="#a0a0a0" /></svg>
        <HThumb />
        <svg width="5" height="9" viewBox="0 0 5 9"><path d="M0 0v9l5-4.500z" fill="#505050" /></svg>
        <Corner />
      </HTrack>
      <WindowsTaskbar />
    </Screen>
  );
}
